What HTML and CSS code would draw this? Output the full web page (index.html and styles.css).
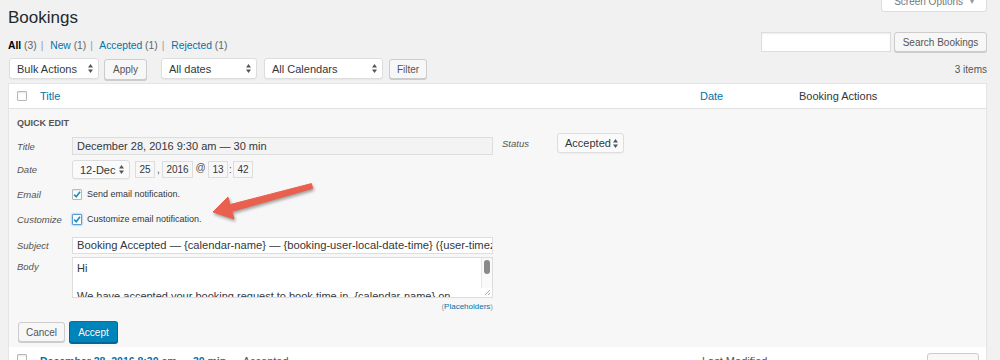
FILE: index.html
```html
<!DOCTYPE html>
<html lang="en">
<head>
  <meta charset="UTF-8">
  <title>Bookings</title>
  <link rel="stylesheet" href="styles.css">
</head>
<body>
<div class="wrap">
  <div class="page-head">
    <h1>Bookings</h1>
    <div class="screen-tab">Screen Options <span class="tab-caret">&#9662;</span></div>
  </div>

  <div class="views-row">
    <div class="subsubsub">
      <span class="current">All</span>&nbsp;<span class="count">(3)</span><span class="sep">|</span>
      <a href="#">New</a>&nbsp;<span class="count">(1)</span><span class="sep">|</span>
      <a href="#">Accepted</a>&nbsp;<span class="count">(1)</span><span class="sep">|</span>
      <a href="#">Rejected</a>&nbsp;<span class="count">(1)</span>
    </div>
    <div class="search-box">
      <span class="search-input"></span>
      <button class="btn btn-search">Search Bookings</button>
    </div>
  </div>

  <div class="tablenav">
    <span class="select sel-bulk">Bulk Actions <svg class="updown" viewBox="0 0 5 9"><polygon points="0,3.5 2.5,0 5,3.5"/><polygon points="0,5.5 2.5,9 5,5.5"/></svg></span>
    <button class="btn btn-apply">Apply</button>
    <span class="select sel-dates">All dates <svg class="updown" viewBox="0 0 5 9"><polygon points="0,3.5 2.5,0 5,3.5"/><polygon points="0,5.5 2.5,9 5,5.5"/></svg></span>
    <span class="select sel-cals">All Calendars <svg class="updown" viewBox="0 0 5 9"><polygon points="0,3.5 2.5,0 5,3.5"/><polygon points="0,5.5 2.5,9 5,5.5"/></svg></span>
    <button class="btn btn-filter">Filter</button>
    <span class="num">3 items</span>
  </div>

  <div class="table">
    <div class="thead">
      <span class="cb-col"><span class="cb"></span></span>
      <a class="col-title" href="#">Title</a>
      <a class="col-date" href="#">Date</a>
      <span class="col-actions">Booking Actions</span>
    </div>

    <div class="quick-edit">
      <div class="legend">Quick Edit</div>
      <div class="qe-cols">
        <div class="qe-left">
          <div class="qe-row">
            <span class="qe-label">Title</span>
            <span class="field field-title">December 28, 2016 9:30 am — 30 min</span>
          </div>
          <div class="qe-row row-date">
            <span class="qe-label">Date</span>
            <span class="select sel-month">12-Dec <svg class="updown" viewBox="0 0 5 9"><polygon points="0,3.5 2.5,0 5,3.5"/><polygon points="0,5.5 2.5,9 5,5.5"/></svg></span>
            <span class="box box-day">25</span>
            <span class="dsep sep-comma">,</span>
            <span class="box box-year">2016</span>
            <span class="dsep sep-at">@</span>
            <span class="box">13</span>
            <span class="dsep sep-colon">:</span>
            <span class="box">42</span>
          </div>
          <div class="qe-row row-check">
            <span class="qe-label">Email</span>
            <span class="cb cb-on"><svg viewBox="0 0 8 9"><path d="M1.2 4.6 L3.3 6.8 L7 1.8"/></svg></span>
            <span class="check-text">Send email notification.</span>
          </div>
          <div class="qe-row row-check">
            <span class="qe-label">Customize</span>
            <span class="cb cb-on cb-focus"><svg viewBox="0 0 8 9"><path d="M1.2 4.6 L3.3 6.8 L7 1.8"/></svg></span>
            <span class="check-text">Customize email notification.</span>
          </div>
          <div class="qe-row row-subject">
            <span class="qe-label">Subject</span>
            <span class="field field-subject">Booking Accepted — {calendar-name} — {booking-user-local-date-time} ({user-timezone})</span>
          </div>
          <div class="qe-row row-body">
            <span class="qe-label">Body</span>
            <div class="textarea">
              Hi<br><br>We have accepted your booking request to book time in &nbsp;{calendar-name} on
              <span class="sb-track"><span class="sb-thumb"></span></span>
              <svg class="grip" viewBox="0 0 6 6"><path d="M1 6 L6 1 M4 6 L6 4"/></svg>
            </div>
          </div>
          <div class="placeholders">(<a href="#">Placeholders</a>)</div>
        </div>
        <div class="qe-right">
          <span class="qe-label">Status</span>
          <span class="select sel-status">Accepted <svg class="updown" viewBox="0 0 5 9"><polygon points="0,3.5 2.5,0 5,3.5"/><polygon points="0,5.5 2.5,9 5,5.5"/></svg></span>
        </div>
      </div>
      <div class="qe-buttons">
        <button class="btn btn-cancel">Cancel</button>
        <button class="btn btn-primary">Accept</button>
      </div>
    </div>

    <div class="trow">
      <span class="cb-col"><span class="cb"></span></span>
      <span class="col-title"><a class="row-title" href="#">December 28, 2016 8:30 am — 30 min</a> — <span class="state">Accepted</span></span>
      <span class="col-date">Last Modified</span>
      <span class="col-actions"><span class="btn btn-row"></span></span>
    </div>
  </div>
</div>

<svg class="arrow" width="1000" height="360" viewBox="0 0 1000 360">
  <polygon points="213,212 228,197 230.1,204.6 311.4,183.6 312.6,188.4 231.9,211.4 234,219"/>
</svg>
</body>
</html>
```

FILE: styles.css
```css
* {
  box-sizing: border-box;
}

body {
  margin: 0;
  background: #f1f1f1;
  color: #444;
  font-family: "Liberation Sans", Arial, sans-serif;
  font-size: 10px;
}

a {
  color: #0073aa;
  text-decoration: none;
}

.wrap {
  padding: 0 13px 0 8px;
}

/* header */
.page-head {
  display: flex;
  justify-content: space-between;
  align-items: flex-start;
}

h1 {
  margin: 7px 0 0;
  font-size: 17px;
  line-height: 22px;
  font-weight: 400;
  color: #23282d;
}

.screen-tab {
  width: 106px;
  height: 12px;
  display: flex;
  align-items: flex-end;
  justify-content: center;
  padding-bottom: 4px;
  background: #fff;
  border: 1px solid #ddd;
  border-top: 0;
  border-radius: 0 0 3px 3px;
  color: #72777c;
  font-size: 10px;
  line-height: 10px;
  white-space: pre;
  overflow: hidden;
}

.tab-caret {
  margin-left: 4px;
  font-size: 8px;
  color: #999;
}

.views-row {
  display: flex;
  justify-content: space-between;
  margin-top: 3px;
  height: 20px;
}

.subsubsub {
  align-self: flex-end;
  font-size: 10.3px;
  line-height: 12px;
  color: #666;
  white-space: nowrap;
}

.subsubsub .current {
  color: #000;
  font-weight: bold;
}

.subsubsub .sep {
  margin: 0 4px;
  color: #999;
}

.search-box {
  display: flex;
  gap: 3px;
}

.search-input {
  width: 130px;
  height: 20px;
  background: #fff;
  border: 1px solid #ddd;
  box-shadow: inset 0 1px 2px rgba(0,0,0,0.07);
}

.btn {
  height: 20px;
  padding: 0 8px;
  font-family: inherit;
  font-size: 10px;
  color: #555;
  background: #f7f7f7;
  border: 1px solid #ccc;
  border-radius: 3px;
  box-shadow: 0 1px 0 #ccc;
  white-space: nowrap;
}

.btn-search { width: 93px; padding: 0; }

/* filters */
.tablenav {
  display: flex;
  align-items: flex-start;
  height: 22px;
  margin-top: 6px;
}

.select {
  display: flex;
  align-items: center;
  justify-content: space-between;
  height: 21px;
  padding: 0 5px 0 7px;
  background: #fff;
  border: 1px solid #ddd;
  border-radius: 3px;
  box-shadow: 0 1px 1px rgba(0,0,0,0.04);
  font-size: 11px;
  color: #32373c;
  white-space: nowrap;
}

.updown {
  width: 5px;
  height: 9px;
  fill: #555;
}

.sel-bulk { width: 90px; margin-left: 1px; }
.btn-apply { width: 43px; margin: 1px 0 0 5px; height: 21px; }
.sel-dates { width: 96px; margin-left: 14px; }
.sel-cals { width: 119px; margin-left: 7px; }
.btn-filter { width: 38px; margin: 1px 0 0 6px; padding: 0; }

.num {
  margin-left: auto;
  align-self: center;
  color: #555;
}

/* table */
.table {
  margin-top: 3px;
  background: #fff;
  border: 1px solid #e5e5e5;
  box-shadow: 0 1px 1px rgba(0,0,0,0.04);
}

.thead {
  display: flex;
  align-items: center;
  height: 25px;
  border-bottom: 1px solid #e1e1e1;
  font-size: 11px;
  color: #32373c;
}

.cb-col {
  width: 31px;
  padding-left: 8px;
  display: flex;
  flex-shrink: 0;
}

.col-title { width: 660px; flex-shrink: 0; }
.col-date { width: 99px; flex-shrink: 0; }
.col-actions { flex: 1; display: flex; }

.cb {
  display: inline-flex;
  align-items: center;
  justify-content: center;
  width: 10px;
  height: 10px;
  background: #fff;
  border: 1px solid #b4b9be;
  border-radius: 1px;
  box-shadow: inset 0 1px 2px rgba(0,0,0,0.1);
  flex-shrink: 0;
}

/* quick edit */
.quick-edit {
  background: #f7f7f7;
  padding: 8px 0 4px 8px;
}

.legend {
  font-size: 9px;
  line-height: 12px;
  font-weight: bold;
  text-transform: uppercase;
  color: #555;
  margin-bottom: 4px;
}

.qe-cols {
  display: flex;
  align-items: flex-start;
}

.qe-left {
  width: 476px;
  padding-top: 4px;
}

.qe-right {
  display: flex;
  align-items: center;
  margin-left: 9px;
}

.qe-row {
  display: flex;
  align-items: center;
  margin-top: 5px;
}

.qe-row:first-child { margin-top: 0; }

.qe-label {
  width: 55px;
  flex-shrink: 0;
  font-style: italic;
  font-size: 9.5px;
  color: #555;
}

.field {
  flex: 1;
  height: 18px;
  padding: 0 4px;
  border: 1px solid #ddd;
  font-size: 11px;
  line-height: 16px;
  color: #32373c;
  white-space: nowrap;
  overflow: hidden;
}

.field-title {
  background: #f3f3f3;
}

.row-date .select {
  height: 19px;
  background: #fafafa;
}

.sel-month { width: 58px; margin-right: 5px; }

.box {
  width: 20px;
  height: 17px;
  border: 1px solid #ddd;
  background: #f7f7f7;
  text-align: center;
  font-size: 10px;
  line-height: 15px;
  color: #32373c;
}

.box-year { width: 31px; }

.dsep {
  text-align: center;
  font-size: 10px;
  color: #555;
}

.sep-comma { width: 7px; }
.sep-at { width: 15px; margin-top: -4px; }
.sep-colon { width: 5px; }

.row-check { height: 20px; }

.cb-on { height: 11px; }

.cb-on svg {
  width: 8px;
  height: 9px;
  fill: none;
  stroke: #1e8cbe;
  stroke-width: 1.7;
}

.cb-focus {
  border-color: #5b9dd9;
  box-shadow: 0 0 2px rgba(30,140,190,0.8);
}

.check-text {
  margin-left: 5px;
  font-size: 9px;
  color: #32373c;
}

.row-subject { margin-top: 8px; }

.field-subject {
  height: 17px;
  background: #fff;
  line-height: 15px;
  font-size: 11.2px;
}

.row-body {
  align-items: flex-start;
  margin-top: 3px;
}

.row-body .qe-label { line-height: 20px; }

.textarea {
  position: relative;
  flex: 1;
  height: 41px;
  padding: 3px 14px 0 4px;
  background: #fff;
  border: 1px solid #ddd;
  font-size: 11px;
  line-height: 14px;
  color: #32373c;
  overflow: hidden;
  white-space: nowrap;
}

.sb-track {
  position: absolute;
  top: 0;
  right: 0;
  width: 11px;
  height: 30px;
  background: #fafafa;
  border-left: 1px solid #e6e6e6;
}

.sb-thumb {
  position: absolute;
  top: 2px;
  left: 2px;
  width: 6px;
  height: 14px;
  border-radius: 3px;
  background: #8a8a8a;
}

.grip {
  position: absolute;
  right: 2px;
  bottom: 2px;
  width: 6px;
  height: 6px;
  stroke: #999;
  stroke-width: 0.8;
}

.placeholders {
  margin-top: 3px;
  text-align: right;
  font-size: 8px;
  line-height: 11px;
  color: #999;
}

.sel-status {
  width: 67px;
  height: 20px;
  margin-left: 0;
  background: #fafafa;
}

.qe-buttons {
  display: flex;
  align-items: center;
  height: 22px;
  margin-top: 9px;
  padding-left: 1px;
}

.btn-cancel { width: 47px; padding: 0; }

.btn-primary {
  width: 49px;
  height: 22px;
  margin-left: 4px;
  padding: 0;
  color: #fff;
  background: #0085ba;
  border-color: #0073aa #006799 #006799;
  box-shadow: 0 1px 0 #006799;
  text-shadow: 0 -1px 1px #006799;
}

/* next row */
.trow {
  display: flex;
  align-items: flex-start;
  height: 40px;
  padding-top: 7px;
  font-size: 11px;
  color: #555;
}

.row-title {
  font-size: 10.5px;
  font-weight: bold;
  line-height: 14px;
}

.trow .col-title { line-height: 14px; }

.trow .col-date { padding-left: 2px; line-height: 14px; }

.btn-row {
  display: block;
  width: 52px;
  height: 22px;
  margin: -1px 7px 0 auto;
  background: #f7f7f7;
}

/* callout arrow */
.arrow {
  position: absolute;
  top: 0;
  left: 0;
  pointer-events: none;
  fill: #e9604f;
  stroke: #e9604f;
  stroke-width: 1;
  stroke-linejoin: round;
  filter: drop-shadow(1px 2px 1.5px rgba(0,0,0,0.35));
}
```
